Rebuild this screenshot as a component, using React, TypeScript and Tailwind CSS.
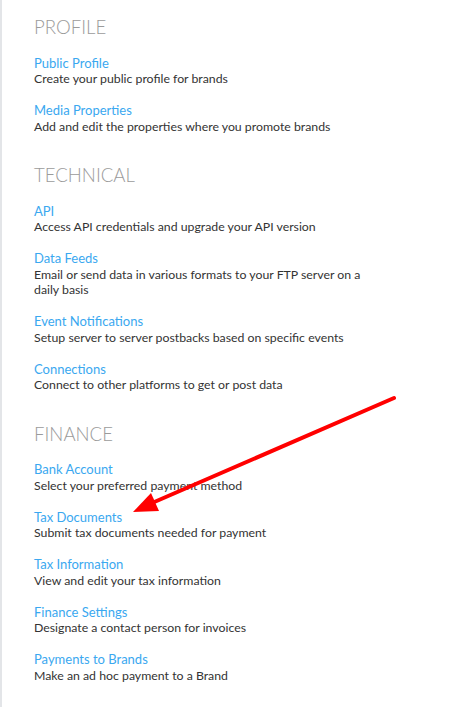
import React from "react";

type Item = { title: string; desc: string };
type Section = { heading: string; items: Item[] };

const sections: Section[] = [
  {
    heading: "PROFILE",
    items: [
      { title: "Public Profile", desc: "Create your public profile for brands" },
      { title: "Media Properties", desc: "Add and edit the properties where you promote brands" },
    ],
  },
  {
    heading: "TECHNICAL",
    items: [
      { title: "API", desc: "Access API credentials and upgrade your API version" },
      { title: "Data Feeds", desc: "Email or send data in various formats to your FTP server on a daily basis" },
      { title: "Event Notifications", desc: "Setup server to server postbacks based on specific events" },
      { title: "Connections", desc: "Connect to other platforms to get or post data" },
    ],
  },
  {
    heading: "FINANCE",
    items: [
      { title: "Bank Account", desc: "Select your preferred payment method" },
      { title: "Tax Documents", desc: "Submit tax documents needed for payment" },
      { title: "Tax Information", desc: "View and edit your tax information" },
      { title: "Finance Settings", desc: "Designate a contact person for invoices" },
      { title: "Payments to Brands", desc: "Make an ad hoc payment to a Brand" },
    ],
  },
];

export default function App() {
  return (
    <div className="relative min-h-[707px] w-[470px] bg-white border-l-2 border-[#e3e5e8] font-['Lato',sans-serif]">
      <div className="flex flex-col gap-[29px] pl-8 pt-[15px] pr-4">
        {sections.map((s) => (
          <div key={s.heading} className="flex flex-col gap-[16.5px]">
            <h2 className="text-[18.6px] leading-6 font-light text-[#9b9b9b]">{s.heading}</h2>
            {s.items.map((it) => (
              <div key={it.title} className="max-w-[345px]">
                <a href="#" className="block text-[13px] leading-[15.5px] text-[#3aa8f0]">
                  {it.title}
                </a>
                <p className="text-[12.3px] leading-[15.5px] text-[#333]">{it.desc}</p>
              </div>
            ))}
          </div>
        ))}
      </div>

      {/* annotation arrow */}
      <svg className="absolute left-0 top-0 pointer-events-none" width="470" height="707">
        <line x1="392" y1="398" x2="150" y2="503" stroke="#f00" strokeWidth="4" strokeLinecap="round" />
        <polygon points="131,512 149,493 157,511" fill="#f00" />
      </svg>
    </div>
  );
}
